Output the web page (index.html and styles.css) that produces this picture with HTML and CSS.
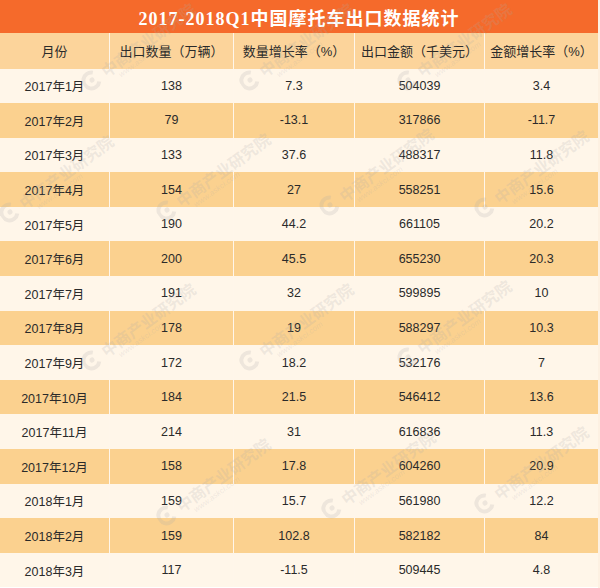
FILE: index.html
```html
<!DOCTYPE html>
<html lang="zh-CN">
<head>
<meta charset="utf-8">
<title>2017-2018Q1中国摩托车出口数据统计</title>
<link rel="stylesheet" href="styles.css">
</head>
<body>
<div class="sheet">
  <div class="title">2017-2018Q1中国摩托车出口数据统计</div>
  <div class="row head"><div>月份</div><div>出口数量（万辆）</div><div>数量增长率（%）</div><div>出口金额（千美元）</div><div>金额增长率（%）</div></div>
  <div class="row odd"><div>2017年1月</div><div>138</div><div>7.3</div><div>504039</div><div>3.4</div></div>
  <div class="row even"><div>2017年2月</div><div>79</div><div>-13.1</div><div>317866</div><div>-11.7</div></div>
  <div class="row odd"><div>2017年3月</div><div>133</div><div>37.6</div><div>488317</div><div>11.8</div></div>
  <div class="row even"><div>2017年4月</div><div>154</div><div>27</div><div>558251</div><div>15.6</div></div>
  <div class="row odd"><div>2017年5月</div><div>190</div><div>44.2</div><div>661105</div><div>20.2</div></div>
  <div class="row even"><div>2017年6月</div><div>200</div><div>45.5</div><div>655230</div><div>20.3</div></div>
  <div class="row odd"><div>2017年7月</div><div>191</div><div>32</div><div>599895</div><div>10</div></div>
  <div class="row even"><div>2017年8月</div><div>178</div><div>19</div><div>588297</div><div>10.3</div></div>
  <div class="row odd"><div>2017年9月</div><div>172</div><div>18.2</div><div>532176</div><div>7</div></div>
  <div class="row even"><div>2017年10月</div><div>184</div><div>21.5</div><div>546412</div><div>13.6</div></div>
  <div class="row odd"><div>2017年11月</div><div>214</div><div>31</div><div>616836</div><div>11.3</div></div>
  <div class="row even"><div>2017年12月</div><div>158</div><div>17.8</div><div>604260</div><div>20.9</div></div>
  <div class="row odd"><div>2018年1月</div><div>159</div><div>15.7</div><div>561980</div><div>12.2</div></div>
  <div class="row even"><div>2018年2月</div><div>159</div><div>102.8</div><div>582182</div><div>84</div></div>
  <div class="row odd"><div>2018年3月</div><div>117</div><div>-11.5</div><div>509445</div><div>4.8</div></div>

  <div class="wms">
    <div class="wm w2"><svg class="logo" viewBox="0 0 20 20"><path d="M15 4.5 A8 8 0 1 0 15 15.5" fill="none" stroke="currentColor" stroke-width="4"/><circle cx="10" cy="10" r="2.5" fill="currentColor"/></svg><span class="wm-t">中商产业研究院<small>www.askci.com</small></span></div>
    <div class="wm w3"><svg class="logo" viewBox="0 0 20 20"><path d="M15 4.5 A8 8 0 1 0 15 15.5" fill="none" stroke="currentColor" stroke-width="4"/><circle cx="10" cy="10" r="2.5" fill="currentColor"/></svg><span class="wm-t">中商产业研究院<small>www.askci.com</small></span></div>
    <div class="wm w4"><svg class="logo" viewBox="0 0 20 20"><path d="M15 4.5 A8 8 0 1 0 15 15.5" fill="none" stroke="currentColor" stroke-width="4"/><circle cx="10" cy="10" r="2.5" fill="currentColor"/></svg><span class="wm-t">中商产业研究院<small>www.askci.com</small></span></div>
    <div class="wm w6"><svg class="logo" viewBox="0 0 20 20"><path d="M15 4.5 A8 8 0 1 0 15 15.5" fill="none" stroke="currentColor" stroke-width="4"/><circle cx="10" cy="10" r="2.5" fill="currentColor"/></svg><span class="wm-t">中商产业研究院<small>www.askci.com</small></span></div>
    <div class="wm w7"><svg class="logo" viewBox="0 0 20 20"><path d="M15 4.5 A8 8 0 1 0 15 15.5" fill="none" stroke="currentColor" stroke-width="4"/><circle cx="10" cy="10" r="2.5" fill="currentColor"/></svg><span class="wm-t">中商产业研究院<small>www.askci.com</small></span></div>
    <div class="wm w8"><svg class="logo" viewBox="0 0 20 20"><path d="M15 4.5 A8 8 0 1 0 15 15.5" fill="none" stroke="currentColor" stroke-width="4"/><circle cx="10" cy="10" r="2.5" fill="currentColor"/></svg><span class="wm-t">中商产业研究院<small>www.askci.com</small></span></div>
    <div class="wm w9"><svg class="logo" viewBox="0 0 20 20"><path d="M15 4.5 A8 8 0 1 0 15 15.5" fill="none" stroke="currentColor" stroke-width="4"/><circle cx="10" cy="10" r="2.5" fill="currentColor"/></svg><span class="wm-t">中商产业研究院<small>www.askci.com</small></span></div>
    <div class="wm w11"><svg class="logo" viewBox="0 0 20 20"><path d="M15 4.5 A8 8 0 1 0 15 15.5" fill="none" stroke="currentColor" stroke-width="4"/><circle cx="10" cy="10" r="2.5" fill="currentColor"/></svg><span class="wm-t">中商产业研究院<small>www.askci.com</small></span></div>
    <div class="wm w12"><svg class="logo" viewBox="0 0 20 20"><path d="M15 4.5 A8 8 0 1 0 15 15.5" fill="none" stroke="currentColor" stroke-width="4"/><circle cx="10" cy="10" r="2.5" fill="currentColor"/></svg><span class="wm-t">中商产业研究院<small>www.askci.com</small></span></div>
    <div class="wm w13"><svg class="logo" viewBox="0 0 20 20"><path d="M15 4.5 A8 8 0 1 0 15 15.5" fill="none" stroke="currentColor" stroke-width="4"/><circle cx="10" cy="10" r="2.5" fill="currentColor"/></svg><span class="wm-t">中商产业研究院<small>www.askci.com</small></span></div>
    <div class="wm w16"><svg class="logo" viewBox="0 0 20 20"><path d="M15 4.5 A8 8 0 1 0 15 15.5" fill="none" stroke="currentColor" stroke-width="4"/><circle cx="10" cy="10" r="2.5" fill="currentColor"/></svg><span class="wm-t">中商产业研究院<small>www.askci.com</small></span></div>
    <div class="wm w17"><svg class="logo" viewBox="0 0 20 20"><path d="M15 4.5 A8 8 0 1 0 15 15.5" fill="none" stroke="currentColor" stroke-width="4"/><circle cx="10" cy="10" r="2.5" fill="currentColor"/></svg><span class="wm-t">中商产业研究院<small>www.askci.com</small></span></div>
    <div class="wm w18"><svg class="logo" viewBox="0 0 20 20"><path d="M15 4.5 A8 8 0 1 0 15 15.5" fill="none" stroke="currentColor" stroke-width="4"/><circle cx="10" cy="10" r="2.5" fill="currentColor"/></svg><span class="wm-t">中商产业研究院<small>www.askci.com</small></span></div>
  </div>
</div>
</body>
</html>
```

FILE: styles.css
```css
html, body {
  margin: 0;
  padding: 0;
  background: #ffffff;
}

.sheet {
  position: relative;
  width: 598px;
  height: 588px;
  overflow: hidden;
  border-right: 2px solid #fdf1e2;
  font-family: "Liberation Sans", "Noto Sans CJK SC", sans-serif;
  color: #2a2a2a;
}

.title {
  height: 33px;
  background: #f56a2b;
  color: #ffffff;
  font-family: "Liberation Serif", "Noto Sans CJK SC", serif;
  font-weight: bold;
  font-size: 18px;
  letter-spacing: 1px;
  display: flex;
  align-items: center;
  justify-content: center;
  padding-top: 1px;
  box-sizing: border-box;
}

.row {
  display: grid;
  grid-template-columns: 109px 124px 121px 130px 114px;
  height: 34.6px;
  font-size: 12.5px;
}

.row > div {
  display: flex;
  align-items: center;
  justify-content: center;
  border-left: 1px solid #fff6ea;
  white-space: nowrap;
}

.row > div:first-child {
  border-left: none;
}

.head {
  height: 35.5px;
  background: #fcd49b;
  font-size: 13px;
}

.odd {
  background: #fff6e9;
}

.even {
  background: #fbd18f;
}

/* watermark overlay */
.wms {
  position: absolute;
  inset: 0;
  pointer-events: none;
}

.wm {
  position: absolute;
  display: flex;
  align-items: center;
  gap: 3px;
  height: 20px;
  transform: rotate(-36deg);
  transform-origin: 10px 10px;
  color: rgba(170, 170, 170, 0.2);
}

.logo {
  width: 20px;
  height: 20px;
  flex: none;
}

.wm-t {
  position: relative;
  font-family: "Noto Sans CJK SC", sans-serif;
  font-weight: bold;
  font-size: 16px;
  line-height: 20px;
  white-space: nowrap;
}

.wm-t small {
  position: absolute;
  left: 12px;
  top: 19px;
  font-family: "Liberation Sans", sans-serif;
  font-weight: normal;
  font-style: italic;
  font-size: 8px;
  line-height: 8px;
}

.w2  { left: 82px;  top: 70px; }
.w3  { left: 240px; top: 70px; }
.w4  { left: 398px; top: 70px; }
.w6  { left: 0px;   top: 202px; }
.w7  { left: 157px; top: 200px; }
.w8  { left: 320px; top: 195px; }
.w9  { left: 475px; top: 197px; }
.w11 { left: 82px;  top: 350px; }
.w12 { left: 240px; top: 350px; }
.w13 { left: 398px; top: 347px; }
.w16 { left: 157px; top: 505px; }
.w17 { left: 322px; top: 498px; }
.w18 { left: 475px; top: 493px; }
```
